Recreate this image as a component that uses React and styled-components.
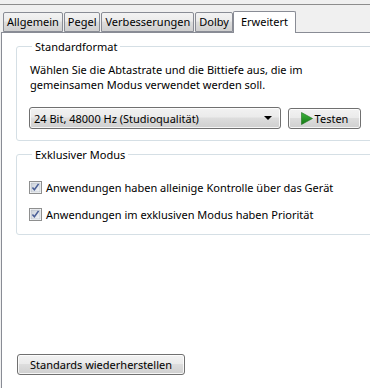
import React from 'react';
import styled, { createGlobalStyle } from 'styled-components';

const GlobalStyle = createGlobalStyle`
  html, body {
    margin: 0;
    padding: 0;
    background: #f0f0f0;
  }
  body {
    font-family: "Noto Sans", "Open Sans", sans-serif;
    font-size: 11px;
    color: #000;
  }
`;

const Window = styled.div`
  width: 370px;
  height: 388px;
  overflow: hidden;
  background: #f0f0f0;
  padding-top: 4px;
  box-sizing: border-box;
`;

const Frame = styled.div`
  height: 384px;
  border-top: 1px solid #8d8d8d;
  display: flex;
  flex-direction: column;
`;

const TabStrip = styled.div`
  display: flex;
  align-items: flex-end;
  height: 27px;
  padding-left: 3px;
  position: relative;
  z-index: 1;
`;

const Tab = styled.div`
  height: ${(p) => (p.$active ? '22px' : '20px')};
  margin-bottom: ${(p) => (p.$active ? '-1px' : '0')};
  padding: 0 ${(p) => (p.$active ? '7px' : '3px')};
  margin-left: ${(p) => (p.$active ? '-1px' : '0')};
  margin-right: ${(p) => (p.$active ? '0' : '1px')};
  border: 1px solid #898c95;
  border-bottom: ${(p) => (p.$active ? 'none' : '1px solid #898c95')};
  border-radius: 2px 2px 0 0;
  background: ${(p) =>
    p.$active ? '#ffffff' : 'linear-gradient(#f3f3f3, #ebebeb 45%, #dddddd 50%, #cfcfcf)'};
  display: flex;
  align-items: ${(p) => (p.$active ? 'flex-start' : 'center')};
  padding-top: ${(p) => (p.$active ? '2px' : '0')};
  box-sizing: border-box;
  white-space: nowrap;
  line-height: 16px;
`;

const Panel = styled.div`
  flex: 1;
  margin-left: 1px;
  width: 400px;
  background: #fff;
  border-left: 1px solid #898c95;
  border-top: 1px solid #898c95;
  padding: 6px 0 0 14px;
  display: flex;
  flex-direction: column;
  box-sizing: border-box;
`;

const Group = styled.fieldset`
  margin: 0 0 ${(p) => p.$gap || 0}px 0;
  min-width: 0;
  width: 380px;
  border: 1px solid #d5dfe5;
  border-radius: 3px;
  padding: ${(p) => p.$pad || '0 0 12px 12px'};
  box-sizing: border-box;
`;

const Legend = styled.legend`
  padding: 0 3px;
  margin-left: 3px;
  line-height: 15px;
`;

const Description = styled.p`
  margin: 8px 0 0 1px;
  line-height: 15px;
  width: 300px;
`;

const FormatRow = styled.div`
  display: flex;
  align-items: center;
  gap: 7px;
  margin-top: 15px;
`;

const Select = styled.div`
  width: 252px;
  height: 22px;
  box-sizing: border-box;
  border: 1px solid #707070;
  border-radius: 3px;
  background: linear-gradient(#f2f2f2, #ebebeb 45%, #dddddd 50%, #cfcfcf);
  box-shadow: inset 0 0 0 1px rgba(255, 255, 255, 0.8);
  display: flex;
  align-items: center;
  justify-content: space-between;
  padding: 0 4px 0 4px;
`;

const Arrow = styled.span`
  width: 0;
  height: 0;
  border-left: 4px solid transparent;
  border-right: 4px solid transparent;
  border-top: 4px solid #000;
  margin-right: 4px;
`;

const Button = styled.button`
  font: inherit;
  color: #000;
  height: ${(p) => p.$h || 21}px;
  width: ${(p) => p.$w}px;
  box-sizing: border-box;
  border: 1px solid #707070;
  border-radius: 3px;
  background: linear-gradient(#f2f2f2, #ebebeb 45%, #dddddd 50%, #cfcfcf);
  box-shadow: inset 0 0 0 1px rgba(255, 255, 255, 0.8);
  display: flex;
  align-items: center;
  justify-content: center;
  gap: 2px;
  padding: 0;
  line-height: 15px;
`;

const CheckRow = styled.label`
  display: flex;
  align-items: center;
  gap: 4px;
  height: 15px;
  margin-top: ${(p) => p.$top}px;
`;

const BottomButton = styled(Button)`
  margin-top: auto;
  margin-bottom: 14px;
  margin-left: 1px;
`;

const Check = () => (
  <svg width="13" height="13" viewBox="0 0 13 13">
    <defs>
      <linearGradient id="cb" x1="0" y1="0" x2="1" y2="1">
        <stop offset="0" stopColor="#c9cfd8" />
        <stop offset="1" stopColor="#f4f6f8" />
      </linearGradient>
    </defs>
    <rect x="0.5" y="0.5" width="12" height="12" fill="#fff" stroke="#8e8f8f" />
    <rect x="2" y="2" width="9" height="9" fill="url(#cb)" stroke="#b0b7c2" strokeWidth="0.6" />
    <path d="M3.4 6.4 L5.4 8.8 L9.6 2.9" fill="none" stroke="#4a5f97" strokeWidth="1.6" />
  </svg>
);

const Play = () => (
  <svg width="12" height="13" viewBox="0 0 12 13">
    <defs>
      <linearGradient id="pl" x1="0" y1="0" x2="0" y2="1">
        <stop offset="0" stopColor="#3fb53f" />
        <stop offset="1" stopColor="#137a13" />
      </linearGradient>
    </defs>
    <polygon points="0.5,0.5 11.5,6.5 0.5,12.5" fill="url(#pl)" stroke="#1d6e1d" strokeWidth="0.6" />
  </svg>
);

const tabs = ['Allgemein', 'Pegel', 'Verbesserungen', 'Dolby', 'Erweitert'];

export default function App() {
  return (
    <Window>
      <GlobalStyle />
      <Frame>
        <TabStrip>
          {tabs.map((t) => (
            <Tab key={t} $active={t === 'Erweitert'}>
              {t}
            </Tab>
          ))}
        </TabStrip>
        <Panel>
          <Group $gap={6} $pad="0 0 11px 12px">
            <Legend>Standardformat</Legend>
            <Description>
              Wählen Sie die Abtastrate und die Bittiefe aus, die im gemeinsamen Modus verwendet
              werden soll.
            </Description>
            <FormatRow>
              <Select>
                <span>24 Bit, 48000 Hz (Studioqualität)</span>
                <Arrow />
              </Select>
              <Button $w={73} $h={21}>
                <Play />
                Testen
              </Button>
            </FormatRow>
          </Group>
          <Group $pad="0 0 12px 12px">
            <Legend>Exklusiver Modus</Legend>
            <CheckRow $top={18}>
              <Check />
              Anwendungen haben alleinige Kontrolle über das Gerät
            </CheckRow>
            <CheckRow $top={12}>
              <Check />
              Anwendungen im exklusiven Modus haben Priorität
            </CheckRow>
          </Group>
          <BottomButton $w={168} $h={21}>
            Standards wiederherstellen
          </BottomButton>
        </Panel>
      </Frame>
    </Window>
  );
}
